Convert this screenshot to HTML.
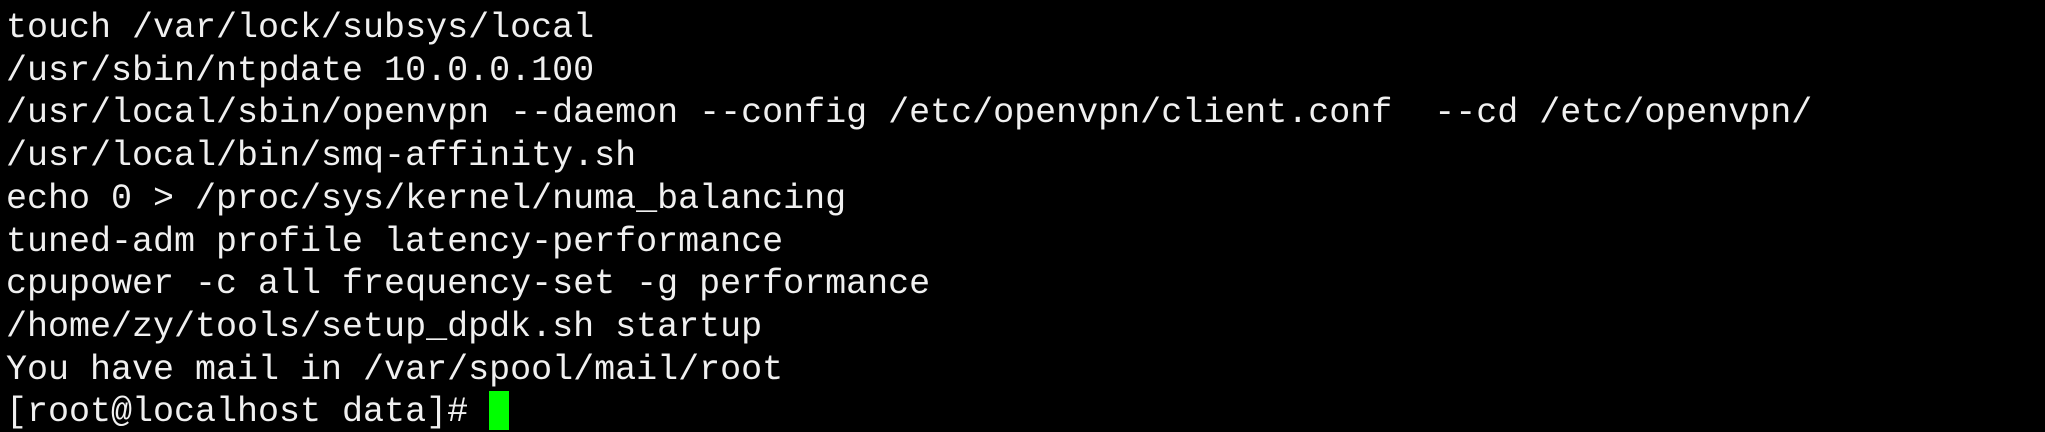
<!DOCTYPE html>
<html><head><meta charset="utf-8"><style>
html,body{margin:0;padding:0;background:#000;width:2045px;height:432px;overflow:hidden}
pre{margin:0;padding:7px 0 0 6px;font-family:"Liberation Mono","Noto Sans CJK SC",monospace;font-size:35px;line-height:42.7px;color:#f0f0f0;white-space:pre}
.c{display:inline-block;width:20px;height:39px;background:#00ff00;vertical-align:-9px}
</style></head><body><pre>touch /var/lock/subsys/local
/usr/sbin/ntpdate 10.0.0.100
/usr/local/sbin/openvpn --daemon --config /etc/openvpn/client.conf  --cd /etc/openvpn/
/usr/local/bin/smq-affinity.sh
echo 0 &gt; /proc/sys/kernel/numa_balancing
tuned-adm profile latency-performance
cpupower -c all frequency-set -g performance
/home/zy/tools/setup_dpdk.sh startup
You have mail in /var/spool/mail/root
[root@localhost data]# <span class="c"></span></pre></body></html>
